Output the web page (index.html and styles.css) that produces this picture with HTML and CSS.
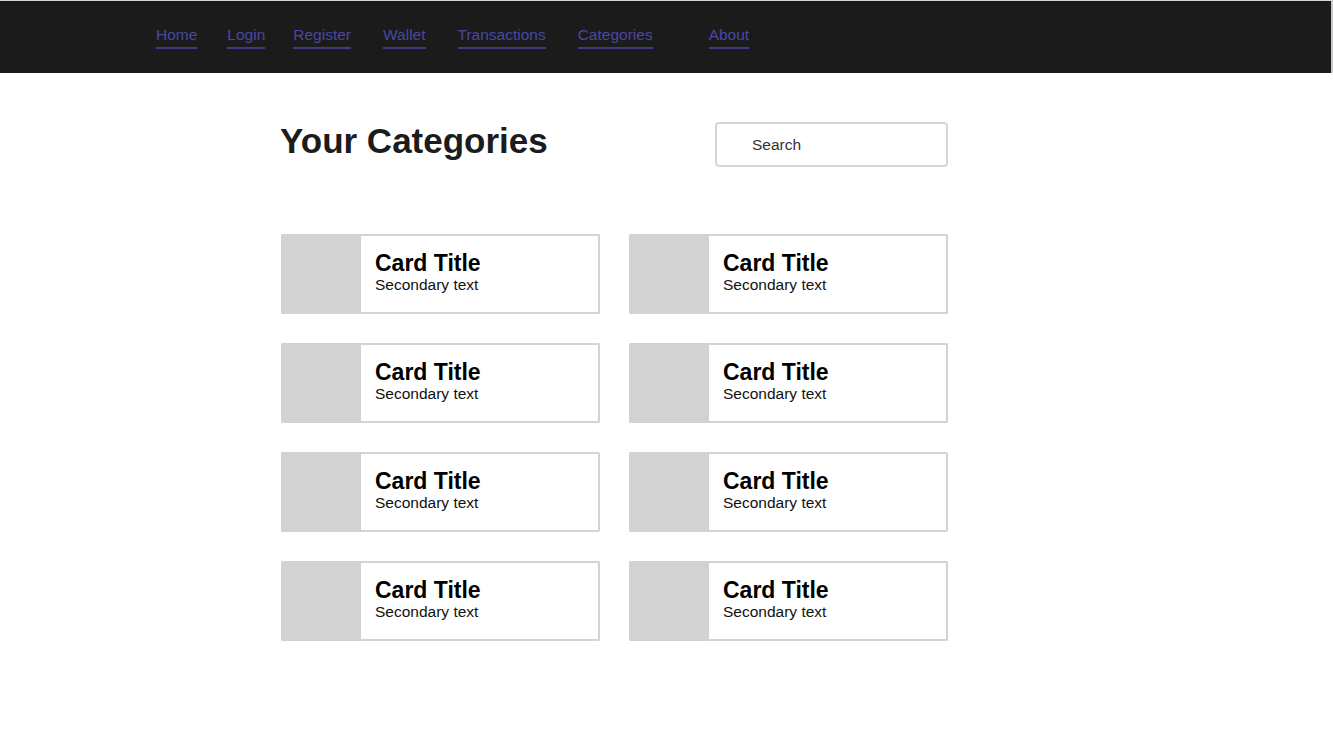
FILE: index.html
```html
<!DOCTYPE html>
<html lang="en">
<head>
<meta charset="utf-8">
<title>Your Categories</title>
<link rel="stylesheet" href="styles.css">
</head>
<body>
<nav class="topbar">
  <ul class="nav-links">
    <li class="nav-item nav-home"><a href="#">Home</a></li>
    <li class="nav-item nav-login"><a href="#">Login</a></li>
    <li class="nav-item nav-register"><a href="#">Register</a></li>
    <li class="nav-item nav-wallet"><a href="#">Wallet</a></li>
    <li class="nav-item nav-transactions"><a href="#">Transactions</a></li>
    <li class="nav-item nav-categories"><a href="#">Categories</a></li>
    <li class="nav-item nav-about"><a href="#">About</a></li>
  </ul>
</nav>
<main class="content">
  <header class="page-head">
    <h1 class="page-title">Your Categories</h1>
    <input class="search" type="text" placeholder="Search">
  </header>
  <section class="card-grid">
    <div class="card"><div class="card-img"></div><div class="card-body"><div class="card-title">Card Title</div><div class="card-sub">Secondary text</div></div></div>
    <div class="card"><div class="card-img"></div><div class="card-body"><div class="card-title">Card Title</div><div class="card-sub">Secondary text</div></div></div>
    <div class="card"><div class="card-img"></div><div class="card-body"><div class="card-title">Card Title</div><div class="card-sub">Secondary text</div></div></div>
    <div class="card"><div class="card-img"></div><div class="card-body"><div class="card-title">Card Title</div><div class="card-sub">Secondary text</div></div></div>
    <div class="card"><div class="card-img"></div><div class="card-body"><div class="card-title">Card Title</div><div class="card-sub">Secondary text</div></div></div>
    <div class="card"><div class="card-img"></div><div class="card-body"><div class="card-title">Card Title</div><div class="card-sub">Secondary text</div></div></div>
    <div class="card"><div class="card-img"></div><div class="card-body"><div class="card-title">Card Title</div><div class="card-sub">Secondary text</div></div></div>
    <div class="card"><div class="card-img"></div><div class="card-body"><div class="card-title">Card Title</div><div class="card-sub">Secondary text</div></div></div>
  </section>
</main>
</body>
</html>
```
FILE: styles.css
```css
html, body {
  margin: 0;
  padding: 0;
  background: #ffffff;
  font-family: "Liberation Sans", Arial, sans-serif;
  font-size: 15.5px;
  color: #000;
}

.topbar {
  background: #1b1b1b;
  border-top: 1px solid #d4d4d4;
  border-right: 2px solid #c8c8c8;
  height: 72px;
  display: flex;
  align-items: center;
  padding-left: 156px;
}

.nav-links {
  list-style: none;
  margin: 0;
  padding: 0;
  display: flex;
}

.nav-item a {
  display: inline-block;
  color: #4a47a6;
  text-decoration: none;
  font-size: 15.5px;
  line-height: 18px;
  padding-bottom: 3px;
  border-bottom: 2px solid #3d3a86;
}

.nav-home { margin-right: 30px; }
.nav-login { margin-right: 28px; }
.nav-register { margin-right: 32px; }
.nav-wallet { margin-right: 32px; }
.nav-transactions { margin-right: 32px; }
.nav-categories { margin-right: 56px; }

.content {
  margin-left: 280px;
  width: 668px;
  padding-top: 48px;
}

.page-head {
  display: flex;
  justify-content: space-between;
  align-items: flex-start;
}

.page-title {
  margin: 0;
  font-size: 35px;
  line-height: 40px;
  font-weight: bold;
  color: #1c1c1c;
}

.search {
  margin-top: 1px;
  width: 233px;
  height: 45px;
  box-sizing: border-box;
  border: 2px solid #d6d6d6;
  border-radius: 4px;
  padding: 0 0 0 35px;
  font-family: "Liberation Sans", Arial, sans-serif;
  font-size: 15.5px;
  color: #333;
  outline: none;
}

.search::placeholder {
  color: #333;
}

.card-grid {
  margin-top: 67px;
  margin-left: 1px;
  display: grid;
  grid-template-columns: 319px 319px;
  column-gap: 29px;
  row-gap: 29px;
}

.card {
  display: flex;
  height: 80px;
  box-sizing: border-box;
  border: 2px solid #d3d3d3;
  border-left: none;
  border-radius: 2px;
  background: #fff;
}

.card-img {
  width: 80px;
  background: #d2d2d2;
  margin-top: -2px;
  margin-bottom: -2px;
  border-radius: 2px 0 0 2px;
}

.card-body {
  display: flex;
  flex-direction: column;
  justify-content: center;
  padding-left: 14px;
  padding-bottom: 4px;
}

.card-title {
  font-size: 23px;
  font-weight: bold;
  line-height: 24px;
}

.card-sub {
  font-size: 15.5px;
  line-height: 19px;
  color: #111;
}
```
